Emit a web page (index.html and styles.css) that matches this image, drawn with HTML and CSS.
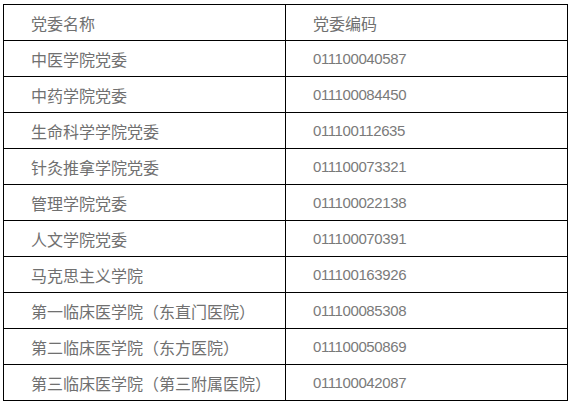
FILE: index.html
```html
<!DOCTYPE html>
<html lang="zh-CN">
<head>
<meta charset="utf-8">
<title>党委编码</title>
<link rel="stylesheet" href="styles.css">
</head>
<body>
<table class="codes">
  <colgroup><col class="col-name"><col class="col-code"></colgroup>
  <tr><td>党委名称</td><td>党委编码</td></tr>
  <tr><td>中医学院党委</td><td class="num">011100040587</td></tr>
  <tr><td>中药学院党委</td><td class="num">011100084450</td></tr>
  <tr><td>生命科学学院党委</td><td class="num">011100112635</td></tr>
  <tr><td>针灸推拿学院党委</td><td class="num">011100073321</td></tr>
  <tr><td>管理学院党委</td><td class="num">011100022138</td></tr>
  <tr><td>人文学院党委</td><td class="num">011100070391</td></tr>
  <tr><td>马克思主义学院</td><td class="num">011100163926</td></tr>
  <tr><td>第一临床医学院（东直门医院）</td><td class="num">011100085308</td></tr>
  <tr><td>第二临床医学院（东方医院）</td><td class="num">011100050869</td></tr>
  <tr><td>第三临床医学院（第三附属医院）</td><td class="num">011100042087</td></tr>
</table>
</body>
</html>
```
FILE: styles.css
```css
html, body {
  margin: 0;
  padding: 0;
  background: #ffffff;
}
body {
  padding: 4px 0 0 3px;
}
.codes {
  border-collapse: collapse;
  width: 564px;
  table-layout: fixed;
  font-family: "Noto Sans CJK SC", "Noto Sans", sans-serif;
  font-size: 16px;
  color: #707070;
}
.col-name {
  width: 282px;
}
.col-code {
  width: 282px;
}
.codes td {
  border: 1px solid #000000;
  height: 35px;
  padding: 0 0 0 27px;
  vertical-align: middle;
  line-height: 20px;
  white-space: nowrap;
}
.num {
  font-family: "Liberation Sans", sans-serif;
  font-size: 15px;
  letter-spacing: -0.4px;
  color: #7a7a7a;
}
```
